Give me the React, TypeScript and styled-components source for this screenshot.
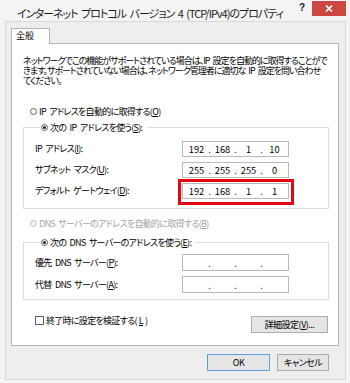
import React from "react";
import styled, { createGlobalStyle } from "styled-components";

const GlobalStyle = createGlobalStyle`
  html, body { margin: 0; padding: 0; background: #f4f4f4; }
  * { box-sizing: border-box; }
`;

const Window = styled.div`
  width: 350px;
  height: 383px;
  background: #f4f4f4;
  display: flex;
  flex-direction: column;
  overflow: hidden;
  font-family: "Noto Sans CJK JP", "Liberation Sans", sans-serif;
  font-feature-settings: "palt";
  color: #000;
  font-size: 9px;
  letter-spacing: -0.7px;
  word-spacing: 2px;
`;

const TitleBar = styled.div`
  height: 21px;
  flex-shrink: 0;
  display: flex;
  align-items: flex-start;
`;

const Title = styled.div`
  flex: 1;
  padding-left: 17px;
  margin-top: 6px;
  font-size: 11px;
  letter-spacing: -1px;
  word-spacing: 2px;
  line-height: 14px;
  color: #1b1b1b;
  white-space: nowrap;
`;

const Help = styled.div`
  margin-top: 3px;
  margin-right: 7px;
  font-family: "Liberation Sans", sans-serif;
  font-weight: bold;
  font-size: 10px;
  line-height: 10px;
  letter-spacing: 0;
  color: #222;
`;

const Close = styled.div`
  width: 34px;
  height: 15px;
  margin-top: 1px;
  margin-right: 4px;
  background: #cb4740;
  display: flex;
  align-items: center;
  justify-content: center;
`;

const Frame = styled.div`
  margin: 0 4px 0 5px;
  height: 359px;
  border: 1px solid #d8d8d8;
  background: #eeeeee;
  padding: 6px 6px 0 5px;
  display: flex;
  flex-direction: column;
`;

const Tab = styled.div`
  align-self: flex-start;
  width: 39px;
  height: 16px;
  border: 1px solid #b4b4b4;
  border-bottom: none;
  background: #fff;
  line-height: 14px;
  letter-spacing: 0;
  padding-left: 4px;
  position: relative;
  z-index: 1;
  margin-bottom: -1px;
`;

const Panel = styled.div`
  width: 328px;
  height: 303px;
  border: 1px solid #b4b4b4;
  background: #fff;
  display: flex;
  flex-direction: column;
`;

const Description = styled.p`
  margin: 12px 0 0 11px;
  line-height: 9.8px;
  letter-spacing: -1px;
  word-spacing: 2px;
  white-space: nowrap;
`;

const RadioRow = styled.label<{ $disabled?: boolean; $top?: number }>`
  display: flex;
  align-items: center;
  gap: 2px;
  height: 12px;
  margin: ${(p) => p.$top ?? 0}px 0 0 18px;
  white-space: pre;
  color: ${(p) => (p.$disabled ? "#a3a3a3" : "#000")};
`;

const RadioDot = styled.span<{ $checked?: boolean; $disabled?: boolean }>`
  width: 7px;
  height: 7px;
  border-radius: 50%;
  border: 1px solid ${(p) => (p.$disabled ? "#c4c4c4" : "#5f5f5f")};
  background: ${(p) => (p.$disabled ? "#f2f2f2" : "#fff")};
  display: flex;
  align-items: center;
  justify-content: center;
  flex-shrink: 0;
  &::after {
    content: "";
    width: 3px;
    height: 3px;
    border-radius: 50%;
    background: #1a1a1a;
    display: ${(p) => (p.$checked ? "block" : "none")};
  }
`;

const RadioText = styled.span`
  white-space: nowrap;
`;

const Group = styled.fieldset<{ $top: number; $pt: number; $pb: number }>`
  margin: ${(p) => p.$top}px 9px 0 11px;
  padding: ${(p) => p.$pt}px 0 ${(p) => p.$pb}px 11px;
  border: 1px solid #dcdcdc;
  min-width: 0;
`;

const Legend = styled.legend`
  margin-left: 5px;
  padding: 0 5px 0 1px;
  height: 12px;
  & > label {
    margin: 0;
  }
`;

const FieldGrid = styled.div<{ $row: number }>`
  display: grid;
  grid-template-columns: 147px 107px;
  grid-auto-rows: ${(p) => p.$row}px;
  row-gap: 5px;
  align-items: center;
`;

const FieldLabel = styled.span`
  white-space: nowrap;
  line-height: 12px;
`;

const IpBox = styled.div`
  position: relative;
  height: 100%;
  border: 1px solid #b9b9b9;
  background: #fff;
  display: grid;
  grid-template-columns: 21px 5px 21px 5px 21px 5px 21px;
  align-items: center;
  padding-left: 3px;
  font-size: 9.3px;
  letter-spacing: 0;
`;

const Octet = styled.span`
  text-align: center;
  line-height: 12px;
`;

const Dot = styled.span`
  text-align: center;
  line-height: 12px;
`;

const Highlight = styled.span`
  position: absolute;
  top: -5px;
  left: -5px;
  right: -6px;
  bottom: -7px;
  border: 3px solid #e30613;
  pointer-events: none;
`;

const Key = styled.span`
  text-decoration: underline;
  text-underline-offset: 1px;
`;

const BottomRow = styled.div`
  display: flex;
  align-items: flex-start;
  justify-content: space-between;
  margin: 14px 10px 0 23px;
`;

const CheckRow = styled.label`
  display: flex;
  align-items: center;
  gap: 2px;
  height: 12px;
  white-space: nowrap;
`;

const CheckBox = styled.span`
  width: 9px;
  height: 9px;
  border: 1px solid #5f5f5f;
  background: #fff;
  flex-shrink: 0;
`;

const Button = styled.button<{ $w: number; $default?: boolean }>`
  width: ${(p) => p.$w}px;
  height: 17px;
  padding: 0;
  margin: 0;
  font: inherit;
  font-size: 9px;
  line-height: 12px;
  letter-spacing: -0.5px;
  color: #000;
  background: #e5e5e5;
  border: 1px solid ${(p) => (p.$default ? "#5c9fe0" : "#acacac")};
  display: flex;
  align-items: center;
  justify-content: center;
  white-space: nowrap;
`;

const AdvancedButton = styled(Button)`
  margin-top: 2px;
`;

const Actions = styled.div`
  display: flex;
  justify-content: flex-end;
  gap: 7px;
  margin: 8px 10px 0 0;
`;

type IpProps = { value?: string[]; highlight?: boolean };

const IpField = ({ value, highlight }: IpProps) => (
  <IpBox>
    {[0, 1, 2, 3].map((i) => (
      <React.Fragment key={i}>
        <Octet>{value ? value[i] : ""}</Octet>
        {i < 3 && <Dot>.</Dot>}
      </React.Fragment>
    ))}
    {highlight && <Highlight />}
  </IpBox>
);

export default function App() {
  return (
    <>
      <GlobalStyle />
      <Window>
        <TitleBar>
          <Title>インターネット プロトコル バージョン 4 (TCP/IPv4)のプロパティ</Title>
          <Help>?</Help>
          <Close>
            <svg width="8" height="7" viewBox="0 0 8 7">
              <path d="M1 0.5 L7 6.5 M7 0.5 L1 6.5" stroke="#fff" strokeWidth="1.7" />
            </svg>
          </Close>
        </TitleBar>
        <Frame>
          <Tab>全般</Tab>
          <Panel>
            <Description>
              ネットワークでこの機能がサポートされている場合は、IP 設定を自動的に取得することがで
              <br />
              きます。サポートされていない場合は、ネットワーク管理者に適切な IP 設定を問い合わせ
              <br />
              てください。
            </Description>

            <RadioRow $top={20}>
              <RadioDot />
              <RadioText>
                IP アドレスを自動的に取得する(<Key>O</Key>)
              </RadioText>
            </RadioRow>

            <Group $top={4} $pt={8} $pb={9}>
              <Legend>
                <RadioRow>
                  <RadioDot $checked />
                  <RadioText>
                    次の IP アドレスを使う(<Key>S</Key>):
                  </RadioText>
                </RadioRow>
              </Legend>
              <FieldGrid $row={16}>
                <FieldLabel>
                  IP アドレス(<Key>I</Key>):
                </FieldLabel>
                <IpField value={["192", "168", "1", "10"]} />
                <FieldLabel>
                  サブネット マスク(<Key>U</Key>):
                </FieldLabel>
                <IpField value={["255", "255", "255", "0"]} />
                <FieldLabel>
                  デフォルト ゲートウェイ(<Key>D</Key>):
                </FieldLabel>
                <IpField value={["192", "168", "1", "1"]} highlight />
              </FieldGrid>
            </Group>

            <RadioRow $top={8} $disabled>
              <RadioDot $disabled />
              <RadioText>
                DNS サーバーのアドレスを自動的に取得する(<Key>B</Key>)
              </RadioText>
            </RadioRow>

            <Group $top={7} $pt={6} $pb={6}>
              <Legend>
                <RadioRow>
                  <RadioDot $checked />
                  <RadioText>
                    次の DNS サーバーのアドレスを使う(<Key>E</Key>):
                  </RadioText>
                </RadioRow>
              </Legend>
              <FieldGrid $row={17}>
                <FieldLabel>
                  優先 DNS サーバー(<Key>P</Key>):
                </FieldLabel>
                <IpField />
                <FieldLabel>
                  代替 DNS サーバー(<Key>A</Key>):
                </FieldLabel>
                <IpField />
              </FieldGrid>
            </Group>

            <BottomRow>
              <CheckRow>
                <CheckBox />
                終了時に設定を検証する(<Key>L</Key>)
              </CheckRow>
              <AdvancedButton $w={77}>
                詳細設定(<Key>V</Key>)...
              </AdvancedButton>
            </BottomRow>
          </Panel>
          <Actions>
            <Button $w={63} $default>
              OK
            </Button>
            <Button $w={52}>キャンセル</Button>
          </Actions>
        </Frame>
      </Window>
    </>
  );
}
